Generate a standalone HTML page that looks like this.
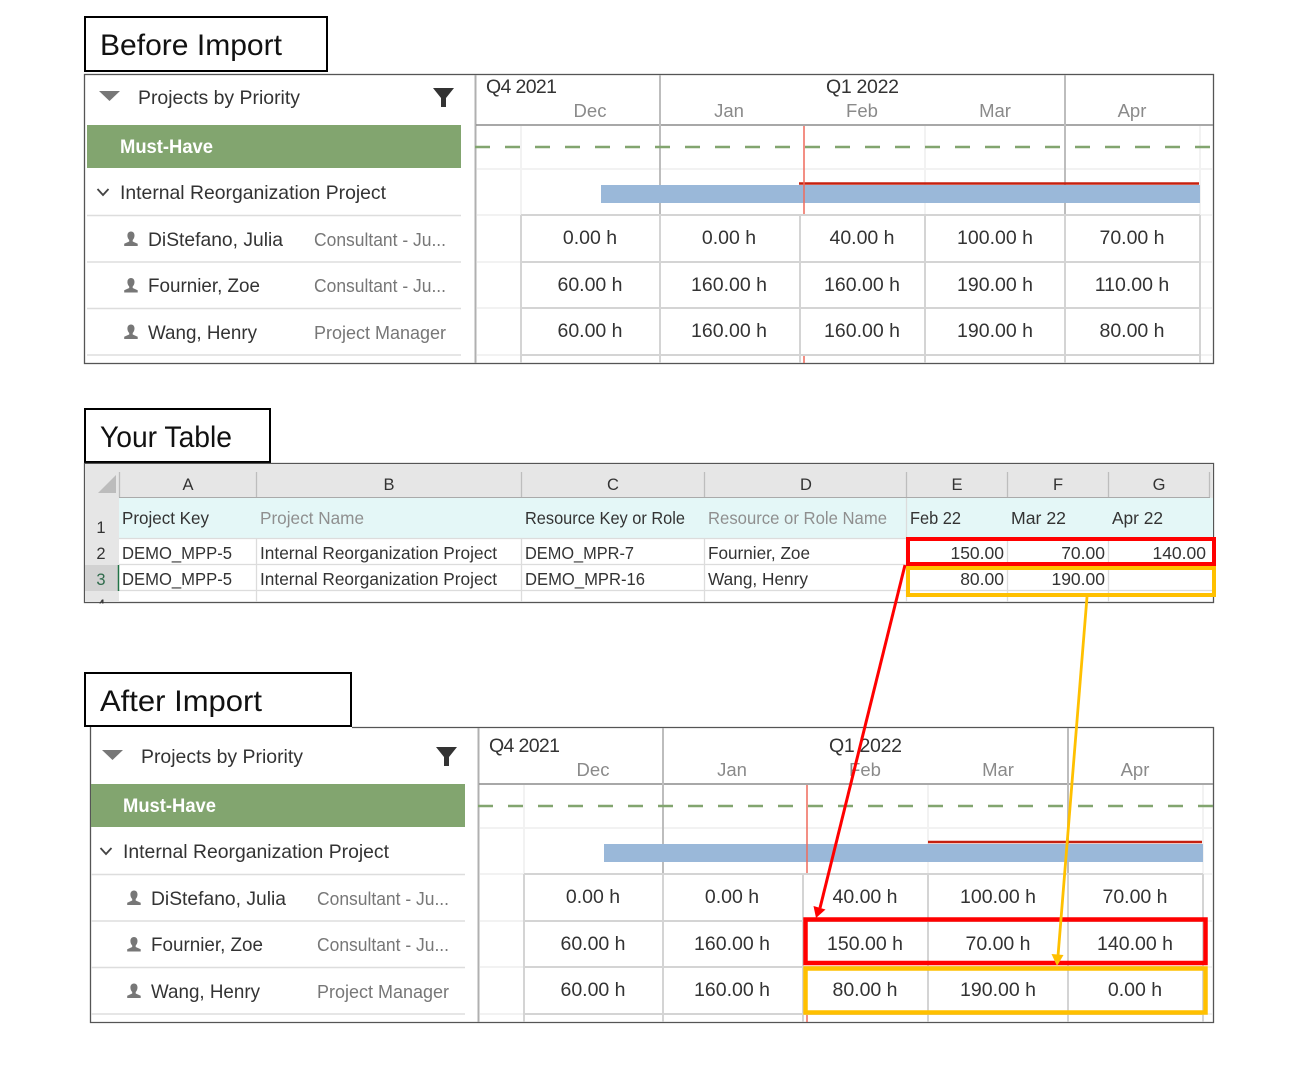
<!DOCTYPE html>
<html><head><meta charset="utf-8"><title>Import</title>
<style>
html,body{margin:0;padding:0;background:#fff;width:1293px;height:1080px;overflow:hidden}
svg{display:block}
text{font-family:"Liberation Sans",sans-serif;fill:#333;font-size:19.5px}
.t{font-size:30px;fill:#111}
.h{fill:#8a8a8a;font-size:18.5px}
.c{text-anchor:middle}
.x{font-size:17.5px;fill:#333}
.xg{font-size:17.5px;fill:#8f8f8f}
.r{font-size:17.5px;fill:#333;text-anchor:end}
.m{fill:#fff;font-weight:bold;font-size:19px}
.o{fill:#777;font-size:18.5px}
.hd{font-size:16.5px;fill:#333;text-anchor:middle}
</style></head><body>
<svg width="1293" height="1080" viewBox="0 0 1293 1080" xmlns="http://www.w3.org/2000/svg">
<rect width="1293" height="1080" fill="#fff"/>

<!-- ============ BEFORE ============ -->
<rect x="85" y="17" width="242" height="54" fill="#fff" stroke="#000" stroke-width="2"/>
<text class="t" x="100" y="55" textLength="182" lengthAdjust="spacingAndGlyphs">Before Import</text>
<rect x="84.5" y="74.5" width="1129" height="289" fill="#fff" stroke="#555" stroke-width="1.3"/>

<g fill="none" stroke="#f2f2f2" stroke-width="2">
<path d="M477 169H1212M477 215H1212M477 262H1212M477 308H1212M477 355H1212"/>
<path d="M521 126V363M925 126V363M1200 126V363"/>
</g>
<path d="M475.500 75V363" stroke="#b0b0b0" stroke-width="2"/>
<path d="M476 125H1213" stroke="#8c8c8c" stroke-width="1.500"/>
<path d="M660 75V363M1065 75V363" stroke="#bdbdbd" stroke-width="2"/>
<path d="M475 147H1212" stroke="#82a56f" stroke-width="2.500" stroke-dasharray="15 15"/>
<rect x="601" y="185" width="599" height="18" fill="#9ab8d9"/>
<path d="M799 183.500H1199" stroke="#c5200f" stroke-width="2.500"/>
<path d="M804 126V215M804 356V363" stroke="#ef6a5c" stroke-width="1.500"/>
<path d="M521 215H1200M521 262H1200M521 308H1200M521 355H1200M521 215V363M660 215V363M800 215V363M925 215V363M1065 215V363M1200 215V363" stroke="#d4d4d4" stroke-width="2" fill="none"/>

<text x="486" y="93" textLength="71">Q4 2021</text>
<text x="826" y="93" textLength="73">Q1 2022</text>
<text class="h c" x="590" y="117">Dec</text>
<text class="h c" x="729" y="117">Jan</text>
<text class="h c" x="862" y="117">Feb</text>
<text class="h c" x="995" y="117">Mar</text>
<text class="h c" x="1132" y="117">Apr</text>

<text class="c" x="590" y="244">0.00 h</text><text class="c" x="729" y="244">0.00 h</text><text class="c" x="862" y="244">40.00 h</text><text class="c" x="995" y="244">100.00 h</text><text class="c" x="1132" y="244">70.00 h</text>
<text class="c" x="590" y="291">60.00 h</text><text class="c" x="729" y="291">160.00 h</text><text class="c" x="862" y="291">160.00 h</text><text class="c" x="995" y="291">190.00 h</text><text class="c" x="1132" y="291">110.00 h</text>
<text class="c" x="590" y="337">60.00 h</text><text class="c" x="729" y="337">160.00 h</text><text class="c" x="862" y="337">160.00 h</text><text class="c" x="995" y="337">190.00 h</text><text class="c" x="1132" y="337">80.00 h</text>

<path d="M99 91H120L109.500 101Z" fill="#777"/>
<text x="138" y="104" textLength="162" lengthAdjust="spacingAndGlyphs">Projects by Priority</text>
<path d="M433 88H454L446 98V107H441V98Z" fill="#333"/>
<rect x="87" y="125" width="374" height="43" fill="#82a56f"/>
<text class="m" x="120" y="153" textLength="93" lengthAdjust="spacingAndGlyphs">Must-Have</text>
<path d="M97.500 189L103 195L108.500 189" fill="none" stroke="#444" stroke-width="1.800"/>
<text x="120" y="199" textLength="266" lengthAdjust="spacingAndGlyphs">Internal Reorganization Project</text>
<path d="M87 215.500H461M87 262H461M87 308.500H461M87 355H461" stroke="#ddd" stroke-width="1.500"/>
<g fill="#777">
<path d="M131 231.500c2.500 0 3.500 2 3.500 4 0 2-.8 3.500-1.800 4.500v1.500l5 2.200v2.300h-13.500v-2.300l5-2.200v-1.500c-1-1-1.800-2.500-1.800-4.500 0-2 1.100-4 3.600-4Z"/>
<path d="M131 278c2.500 0 3.500 2 3.500 4 0 2-.8 3.500-1.800 4.500v1.500l5 2.200v2.300h-13.500v-2.300l5-2.200v-1.500c-1-1-1.800-2.500-1.800-4.500 0-2 1.100-4 3.600-4Z"/>
<path d="M131 324.500c2.500 0 3.500 2 3.500 4 0 2-.8 3.500-1.800 4.500v1.500l5 2.200v2.300h-13.500v-2.300l5-2.200v-1.500c-1-1-1.800-2.500-1.800-4.500 0-2 1.100-4 3.600-4Z"/>
</g>
<text x="148" y="246" textLength="135" lengthAdjust="spacingAndGlyphs">DiStefano, Julia</text>
<text x="148" y="292" textLength="112" lengthAdjust="spacingAndGlyphs">Fournier, Zoe</text>
<text x="148" y="339" textLength="109" lengthAdjust="spacingAndGlyphs">Wang, Henry</text>
<text class="o" x="314" y="246" textLength="132" lengthAdjust="spacingAndGlyphs">Consultant - Ju...</text>
<text class="o" x="314" y="292" textLength="132" lengthAdjust="spacingAndGlyphs">Consultant - Ju...</text>
<text class="o" x="314" y="339" textLength="132" lengthAdjust="spacingAndGlyphs">Project Manager</text>

<!-- ============ TABLE ============ -->
<rect x="85" y="409" width="185" height="53" fill="#fff" stroke="#000" stroke-width="2"/>
<text class="t" x="100" y="447" textLength="132" lengthAdjust="spacingAndGlyphs">Your Table</text>
<rect x="84.500" y="463.500" width="1129" height="139" fill="#fff" stroke="#555" stroke-width="1.300"/>
<rect x="85" y="464" width="1128" height="34" fill="#e6e6e6"/>
<rect x="85" y="464" width="34" height="138" fill="#e6e6e6"/>
<rect x="85" y="565" width="34" height="26" fill="#d2d2d2"/>
<rect x="119" y="498" width="1094" height="40" fill="#e4f7f7"/>
<path d="M98 493L116 475V493Z" fill="#bcbcbc"/>
<path d="M119 497.500H1210" stroke="#aaa" stroke-width="1"/>
<path d="M119 538.500H1213M119 564.500H1213M119 590.500H1213" stroke="#dcdcdc" stroke-width="1.300"/>
<path d="M256.500 472V497M521.500 472V497M704.500 472V497M906.500 472V497M1007.500 472V497M1108.500 472V497M1209.500 472V497M119.500 472V497" stroke="#bdbdbd" stroke-width="1.300"/>
<path d="M256.500 539V602M521.500 539V602M704.500 539V602M906.500 498V602M1007.500 539V602M1108.500 539V602" stroke="#dcdcdc" stroke-width="1.300"/>
<path d="M118.500 565V591" stroke="#217346" stroke-width="1.500"/>
<text class="hd" x="188" y="490">A</text><text class="hd" x="389" y="490">B</text><text class="hd" x="613" y="490">C</text><text class="hd" x="806" y="490">D</text><text class="hd" x="957" y="490">E</text><text class="hd" x="1058" y="490">F</text><text class="hd" x="1159" y="490">G</text>
<text class="hd" x="101" y="533">1</text><text class="hd" x="101" y="559">2</text><text class="hd" x="101" y="585" style="fill:#2f6b4c">3</text><text class="hd" x="101" y="611">4</text>
<rect x="0" y="603.500" width="1293" height="14" fill="#fff"/>
<text class="x" x="122" y="524" textLength="87" lengthAdjust="spacingAndGlyphs">Project Key</text>
<text class="xg" x="260" y="524" textLength="104" lengthAdjust="spacingAndGlyphs">Project Name</text>
<text class="x" x="525" y="524" textLength="160" lengthAdjust="spacingAndGlyphs">Resource Key or Role</text>
<text class="xg" x="708" y="524" textLength="179" lengthAdjust="spacingAndGlyphs">Resource or Role Name</text>
<text class="x" x="910" y="524" textLength="51" lengthAdjust="spacingAndGlyphs">Feb 22</text>
<text class="x" x="1011" y="524" textLength="55" lengthAdjust="spacingAndGlyphs">Mar 22</text>
<text class="x" x="1112" y="524" textLength="51" lengthAdjust="spacingAndGlyphs">Apr 22</text>
<text class="x" x="122" y="559" textLength="110" lengthAdjust="spacingAndGlyphs">DEMO_MPP-5</text>
<text class="x" x="260" y="559" textLength="237" lengthAdjust="spacingAndGlyphs">Internal Reorganization Project</text>
<text class="x" x="525" y="559" textLength="109" lengthAdjust="spacingAndGlyphs">DEMO_MPR-7</text>
<text class="x" x="708" y="559" textLength="102" lengthAdjust="spacingAndGlyphs">Fournier, Zoe</text>
<text class="r" x="1004" y="559">150.00</text><text class="r" x="1105" y="559">70.00</text><text class="r" x="1206" y="559">140.00</text>
<text class="x" x="122" y="585" textLength="110" lengthAdjust="spacingAndGlyphs">DEMO_MPP-5</text>
<text class="x" x="260" y="585" textLength="237" lengthAdjust="spacingAndGlyphs">Internal Reorganization Project</text>
<text class="x" x="525" y="585" textLength="120" lengthAdjust="spacingAndGlyphs">DEMO_MPR-16</text>
<text class="x" x="708" y="585" textLength="100" lengthAdjust="spacingAndGlyphs">Wang, Henry</text>
<text class="r" x="1004" y="585">80.00</text><text class="r" x="1105" y="585">190.00</text>
<rect x="908" y="539" width="306" height="25" fill="none" stroke="#ff0000" stroke-width="4"/>
<rect x="908" y="568" width="306" height="27" fill="none" stroke="#ffc000" stroke-width="4"/>

<!-- ============ AFTER ============ -->
<rect x="85" y="673" width="266" height="53" fill="#fff" stroke="#000" stroke-width="2"/>
<text class="t" x="100" y="711" textLength="162" lengthAdjust="spacingAndGlyphs">After Import</text>
<path d="M352 727.500H1213.500V1022.500H90.500V727" fill="none" stroke="#555" stroke-width="1.300"/>

<g fill="none" stroke="#f2f2f2" stroke-width="2">
<path d="M480 828H1212M480 874H1212M480 921H1212M480 967H1212M480 1014H1212"/>
<path d="M524 785V1022M928 785V1022M1203 785V1022"/>
</g>
<path d="M478.500 728V1022" stroke="#b0b0b0" stroke-width="2"/>
<path d="M479 784H1213" stroke="#8c8c8c" stroke-width="1.500"/>
<path d="M663 728V1022M1068 728V1022" stroke="#bdbdbd" stroke-width="2"/>
<path d="M478 806H1213" stroke="#82a56f" stroke-width="2.500" stroke-dasharray="15 15"/>
<rect x="604" y="844" width="599" height="18" fill="#9ab8d9"/>
<path d="M928 842H1202" stroke="#c5200f" stroke-width="2.500"/>
<path d="M807 785V874M807 1015V1022" stroke="#ef6a5c" stroke-width="1.500"/>
<path d="M524 874H1203M524 921H1203M524 967H1203M524 1014H1203M524 874V1022M663 874V1022M803 874V1022M928 874V1022M1068 874V1022M1203 874V1022" stroke="#d4d4d4" stroke-width="2" fill="none"/>

<text x="489" y="752" textLength="71">Q4 2021</text>
<text x="829" y="752" textLength="73">Q1 2022</text>
<text class="h c" x="593" y="776">Dec</text>
<text class="h c" x="732" y="776">Jan</text>
<text class="h c" x="865" y="776">Feb</text>
<text class="h c" x="998" y="776">Mar</text>
<text class="h c" x="1135" y="776">Apr</text>

<text class="c" x="593" y="903">0.00 h</text><text class="c" x="732" y="903">0.00 h</text><text class="c" x="865" y="903">40.00 h</text><text class="c" x="998" y="903">100.00 h</text><text class="c" x="1135" y="903">70.00 h</text>
<text class="c" x="593" y="950">60.00 h</text><text class="c" x="732" y="950">160.00 h</text><text class="c" x="865" y="950">150.00 h</text><text class="c" x="998" y="950">70.00 h</text><text class="c" x="1135" y="950">140.00 h</text>
<text class="c" x="593" y="996">60.00 h</text><text class="c" x="732" y="996">160.00 h</text><text class="c" x="865" y="996">80.00 h</text><text class="c" x="998" y="996">190.00 h</text><text class="c" x="1135" y="996">0.00 h</text>

<path d="M102 750H123L112.500 760Z" fill="#777"/>
<text x="141" y="763" textLength="162" lengthAdjust="spacingAndGlyphs">Projects by Priority</text>
<path d="M436 747H457L449 757V766H444V757Z" fill="#333"/>
<rect x="91" y="784" width="374" height="43" fill="#82a56f"/>
<text class="m" x="123" y="812" textLength="93" lengthAdjust="spacingAndGlyphs">Must-Have</text>
<path d="M100.500 848L106 854L111.500 848" fill="none" stroke="#444" stroke-width="1.800"/>
<text x="123" y="858" textLength="266" lengthAdjust="spacingAndGlyphs">Internal Reorganization Project</text>
<path d="M91 874.500H465M91 921H465M91 967.500H465M91 1014H465" stroke="#ddd" stroke-width="1.500"/>
<g fill="#777">
<path d="M134 890.500c2.500 0 3.500 2 3.500 4 0 2-.8 3.500-1.800 4.500v1.500l5 2.200v2.300h-13.500v-2.300l5-2.200v-1.500c-1-1-1.800-2.500-1.800-4.500 0-2 1.100-4 3.600-4Z"/>
<path d="M134 937c2.500 0 3.500 2 3.500 4 0 2-.8 3.500-1.800 4.500v1.500l5 2.200v2.300h-13.500v-2.300l5-2.200v-1.500c-1-1-1.800-2.500-1.800-4.500 0-2 1.100-4 3.600-4Z"/>
<path d="M134 983.500c2.500 0 3.500 2 3.500 4 0 2-.8 3.500-1.800 4.500v1.500l5 2.200v2.300h-13.500v-2.300l5-2.200v-1.500c-1-1-1.800-2.500-1.800-4.500 0-2 1.100-4 3.600-4Z"/>
</g>
<text x="151" y="905" textLength="135" lengthAdjust="spacingAndGlyphs">DiStefano, Julia</text>
<text x="151" y="951" textLength="112" lengthAdjust="spacingAndGlyphs">Fournier, Zoe</text>
<text x="151" y="998" textLength="109" lengthAdjust="spacingAndGlyphs">Wang, Henry</text>
<text class="o" x="317" y="905" textLength="132" lengthAdjust="spacingAndGlyphs">Consultant - Ju...</text>
<text class="o" x="317" y="951" textLength="132" lengthAdjust="spacingAndGlyphs">Consultant - Ju...</text>
<text class="o" x="317" y="998" textLength="132" lengthAdjust="spacingAndGlyphs">Project Manager</text>

<rect x="805.500" y="919.500" width="400" height="43.500" fill="none" stroke="#ff0000" stroke-width="4.500"/>
<rect x="805.500" y="968.500" width="400" height="44" fill="none" stroke="#ffc000" stroke-width="4.500"/>

<!-- arrows -->
<path d="M905 565L820 908" stroke="#ff0000" stroke-width="3" fill="none"/>
<path d="M816 918L813.500 906L825.500 909.500Z" fill="#ff0000"/>
<path d="M1087 597L1058 956" stroke="#ffc000" stroke-width="2.800" fill="none"/>
<path d="M1057 966L1051.500 954L1063.500 955Z" fill="#ffc000"/>
</svg>
</body></html>
